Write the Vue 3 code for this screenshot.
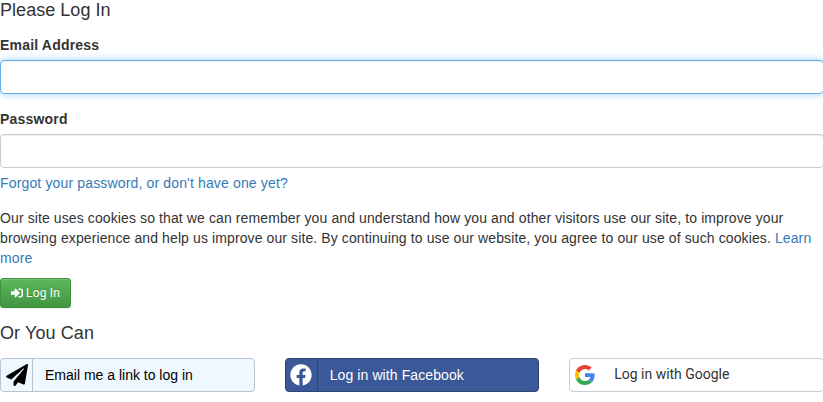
<script setup>
import { ref } from 'vue'

const email = ref('')
const password = ref('')
</script>

<template>
  <main class="login">
    <h4 class="title">Please Log In</h4>
    <form @submit.prevent>
      <div class="group">
        <label for="email">Email Address</label>
        <input id="email" v-model="email" class="control active" type="email" />
      </div>
      <div class="group">
        <label for="password">Password</label>
        <input id="password" v-model="password" class="control" type="password" />
        <a class="forgot" href="#">Forgot your password, or don't have one yet?</a>
      </div>
      <p class="cookies">
        Our site uses cookies so that we can remember you and understand how you and other visitors use our site, to improve your browsing experience and help us improve our site. By continuing to use our website, you agree to our use of such cookies. <a href="#">Learn more</a>
      </p>
      <button class="submit" type="submit">
        <svg viewBox="0 0 512 512" width="12" height="12" aria-hidden="true">
          <path fill="#fff" d="M416 448h-84c-6.600 0-12-5.400-12-12v-40c0-6.600 5.400-12 12-12h84c17.700 0 32-14.300 32-32V160c0-17.700-14.300-32-32-32h-84c-6.600 0-12-5.400-12-12V76c0-6.600 5.400-12 12-12h84c53 0 96 43 96 96v192c0 53-43 96-96 96zM369 239L201 71c-15-15-41-4.500-41 17v96H24c-13.300 0-24 10.700-24 24v96c0 13.300 10.700 24 24 24h136v96c0 21.500 26 32 41 17l168-168c9.300-9.400 9.300-24.600 0-34z" />
        </svg>
        <span>Log In</span>
      </button>
    </form>
    <h4 class="title alt">Or You Can</h4>
    <div class="options">
      <button class="option email">
        <span class="icon">
          <svg viewBox="0 0 512 512" width="22" height="22" aria-hidden="true">
            <path d="M476 3.200L12.500 270.600c-18.100 10.400-15.800 35.600 2.200 43.200L121 358.400l287.300-253.200c5.500-4.900 13.300 2.600 8.600 8.300L176 407v80.500c0 23.600 28.500 32.900 42.500 15.800L282 426l124.600 52.200c14.200 6 30.400-2.900 33-18.200l72-432C515 7.800 493.300-6.800 476 3.200z" />
          </svg>
        </span>
        <span class="text">Email me a link to log in</span>
      </button>
      <button class="option facebook">
        <span class="icon">
          <svg viewBox="0 0 512 512" width="22" height="22" aria-hidden="true">
            <path fill="#fff" d="M504 256C504 119 393 8 256 8S8 119 8 256c0 123.800 90.700 226.400 209.300 245V327.700h-63V256h63v-54.600c0-62.200 37-96.500 93.700-96.500 27.100 0 55.500 4.800 55.500 4.800v61h-31.300c-30.800 0-40.400 19.100-40.400 38.700V256h68.800l-11 71.700h-57.800V501C413.300 482.400 504 379.800 504 256z" />
          </svg>
        </span>
        <span class="text">Log in with Facebook</span>
      </button>
      <button class="option google">
        <span class="icon">
          <svg viewBox="0 0 48 48" width="20" height="20" aria-hidden="true">
            <path fill="#EA4335" d="M24 9.500c3.540 0 6.710 1.220 9.210 3.600l6.850-6.850C35.900 2.380 30.470 0 24 0 14.620 0 6.510 5.380 2.560 13.220l7.980 6.190C12.430 13.720 17.740 9.500 24 9.500z" />
            <path fill="#4285F4" d="M46.980 24.550c0-1.570-.15-3.090-.38-4.550H24v9.020h12.940c-.58 2.960-2.260 5.480-4.780 7.180l7.730 6c4.510-4.180 7.090-10.360 7.090-17.650z" />
            <path fill="#FBBC05" d="M10.530 28.590A14.500 14.500 0 0 1 9.770 24c0-1.600.27-3.140.76-4.590l-7.980-6.190A23.900 23.900 0 0 0 0 24c0 3.880.92 7.540 2.560 10.780l7.970-6.190z" />
            <path fill="#34A853" d="M24 48c6.480 0 11.930-2.130 15.890-5.810l-7.730-6C30 37.640 27.240 38.490 24 38.490c-6.260 0-11.570-4.220-13.470-9.910l-7.980 6.190C6.510 42.620 14.620 48 24 48z" />
          </svg>
        </span>
        <span class="text">Log in with Google</span>
      </button>
    </div>
  </main>
</template>

<style>
body {
  background: #fff;
  overflow: hidden;
}
</style>

<style scoped>
.login,
.login * {
  box-sizing: border-box;
}
.login {
  width: 824px;
  height: 402px;
  font-family: "Liberation Sans", Arial, sans-serif;
  font-size: 14px;
  line-height: 20px;
  color: #333;
}
.title {
  margin: 0 0 15px;
  font-size: 18px;
  font-weight: 400;
  line-height: 20px;
  letter-spacing: 0.04px;
}
.group {
  margin-bottom: 15px;
}
label {
  display: block;
  margin-bottom: 5px;
  font-weight: 700;
  letter-spacing: 0.19px;
}
.control {
  display: block;
  width: 100%;
  height: 34px;
  padding: 6px 12px;
  font: inherit;
  color: #555;
  background: #fff;
  border: 1px solid #ccc;
  border-radius: 4px;
  outline: 0;
  box-shadow: inset 0 1px 1px rgba(0, 0, 0, 0.075);
}
.control.active {
  border-color: #66afe9;
  box-shadow: inset 0 1px 1px rgba(0, 0, 0, 0.075), 0 0 8px rgba(102, 175, 233, 0.6);
}
a {
  color: #337ab7;
  text-decoration: none;
}
.forgot {
  display: block;
  margin-top: 5px;
  letter-spacing: 0.15px;
}
.cookies {
  margin: 0 0 10px;
  letter-spacing: 0.107px;
}
.submit {
  display: flex;
  align-items: center;
  gap: 3px;
  height: 30px;
  width: 71px;
  padding: 0 10px;
  font-family: Roboto, sans-serif;
  font-size: 12px;
  line-height: 18px;
  letter-spacing: 0.2px;
  color: #fff;
  white-space: nowrap;
  text-shadow: 0 -1px 0 rgba(0, 0, 0, 0.2);
  background: linear-gradient(to bottom, #5cb85c 0%, #419641 100%);
  border: 1px solid #3e8f3e;
  border-radius: 3px;
  box-shadow: inset 0 1px 0 rgba(255, 255, 255, 0.15), 0 1px 1px rgba(0, 0, 0, 0.075);
}
.submit svg {
  flex: none;
}
.title.alt {
  margin: 15px 0;
  letter-spacing: 0.1px;
}
.options {
  display: grid;
  grid-template-columns: repeat(3, 1fr);
  gap: 30px;
}
.option {
  display: flex;
  align-items: stretch;
  height: 34px;
  padding: 0;
  font: inherit;
  text-align: left;
  border: 1px solid;
  border-radius: 4px;
}
.icon {
  display: flex;
  align-items: center;
  justify-content: center;
  width: 32px;
  border-right: 1px solid;
  border-color: inherit;
}
.text {
  padding: 6px 12px;
}
.email {
  color: #000;
  background: #f0f8ff;
  border-color: #b9c4ce;
}
.facebook {
  color: #fff;
  background: #3b5998;
  border-color: #2d4373;
}
.facebook .text {
  letter-spacing: 0.1px;
}
.google {
  color: #333;
  background: #fff;
  border-color: #ccc;
}
.google .icon {
  border-right: 0;
  width: 30px;
}
.google .text {
  padding: 5px 14px;
  font-family: Roboto, sans-serif;
  letter-spacing: -0.02px;
}
</style>
